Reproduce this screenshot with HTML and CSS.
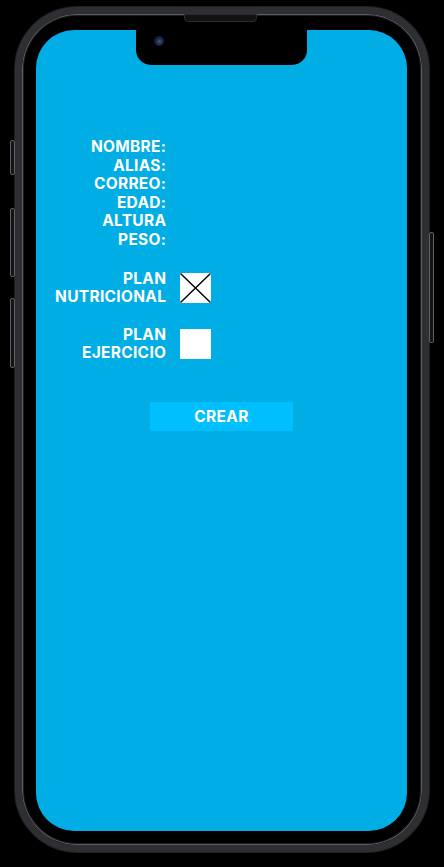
FILE: index.html
```html
<!DOCTYPE html>
<html lang="es">
<head>
<meta charset="utf-8">
<title>Registro</title>
<link rel="stylesheet" href="styles.css">
</head>
<body>
<div class="phone">
  <span class="btn-side btn-silent"></span>
  <span class="btn-side btn-vol-up"></span>
  <span class="btn-side btn-vol-down"></span>
  <span class="btn-side btn-power"></span>
  <span class="speaker"></span>
  <div class="screen">
    <div class="notch"><span class="camera"></span></div>
    <div class="content">
      <div class="labels">
        <div class="label">NOMBRE:</div>
        <div class="label">ALIAS:</div>
        <div class="label">CORREO:</div>
        <div class="label">EDAD:</div>
        <div class="label">ALTURA</div>
        <div class="label">PESO:</div>
      </div>
      <div class="check-row">
        <div class="label">PLAN<br>NUTRICIONAL</div>
        <div class="checkbox checked">
          <svg viewBox="0 0 31 30" width="31" height="30"><path d="M0.5 0.5 L30.5 29.5 M30.5 0.5 L0.5 29.5" stroke="#000" stroke-width="1.4" fill="none"/></svg>
        </div>
      </div>
      <div class="check-row">
        <div class="label">PLAN<br>EJERCICIO</div>
        <div class="checkbox"></div>
      </div>
      <div class="actions">
        <button class="create">CREAR</button>
      </div>
    </div>
  </div>
</div>
</body>
</html>
```

FILE: styles.css
```css
html, body {
  margin: 0;
  padding: 0;
  background: #000;
}
body {
  width: 444px;
  height: 867px;
  overflow: hidden;
  font-family: Inter, "Liberation Sans", sans-serif;
}
.phone {
  position: relative;
  box-sizing: border-box;
  width: 414px;
  height: 845px;
  margin: 7px 0 0 15px;
  border: 7px solid #2e2f32;
  border-radius: 62px;
  background: #000;
  padding: 16px 15px 14px 14px;
  box-shadow: inset 0 0 0 1px #5d5e62, inset 0 0 0 2px #1c1d1f, 0 0 0 1px #1e1f21;
}
.btn-side {
  position: absolute;
  width: 3px;
  background: #141416;
  border: 1px solid #5f6064;
  border-radius: 2px;
}
.btn-silent { left: -12px; top: 126px; height: 33px; }
.btn-vol-up { left: -12px; top: 194px; height: 67px; }
.btn-vol-down { left: -12px; top: 284px; height: 68px; }
.btn-power { right: -12px; top: 218px; height: 109px; }
.speaker {
  position: absolute;
  left: 162px;
  top: 0px;
  width: 71px;
  height: 6px;
  background: #121213;
  border: 1px solid #2c2d30;
  border-radius: 0 0 4px 4px;
}
.screen {
  position: relative;
  height: 100%;
  background: #00ade5;
  border-radius: 38px;
  overflow: hidden;
}
.notch {
  position: absolute;
  left: 100px;
  top: 0;
  width: 171px;
  height: 35px;
  background: #000;
  border-radius: 0 0 15px 15px;
}
.camera {
  position: absolute;
  left: 18px;
  top: 6px;
  width: 10px;
  height: 10px;
  border-radius: 50%;
  background: radial-gradient(circle at 55% 55%, #3c5a8a 0, #1a2540 45%, #0a0d18 100%);
}
.content {
  padding-top: 108px;
  display: flex;
  flex-direction: column;
}
.label {
  width: 130.3px;
  text-align: right;
  color: #fff;
  font-weight: 700;
  font-size: 15.5px;
  line-height: 18.6px;
  letter-spacing: 0.3px;
}
.labels {
  display: flex;
  flex-direction: column;
}
.check-row {
  display: flex;
  align-items: center;
  gap: 13.7px;
  margin-top: 20px;
}
.check-row + .check-row {
  margin-top: 19px;
}
.checkbox {
  width: 31px;
  height: 30px;
  background: #fff;
}
.checkbox svg {
  display: block;
}
.actions {
  display: flex;
  justify-content: center;
  margin-top: 39px;
}
.create {
  width: 143px;
  height: 29px;
  border: 0;
  padding: 0;
  background: #00bffe;
  color: #fff;
  font-family: Inter, "Liberation Sans", sans-serif;
  font-weight: 700;
  font-size: 15.5px;
  letter-spacing: 0.3px;
}
```
